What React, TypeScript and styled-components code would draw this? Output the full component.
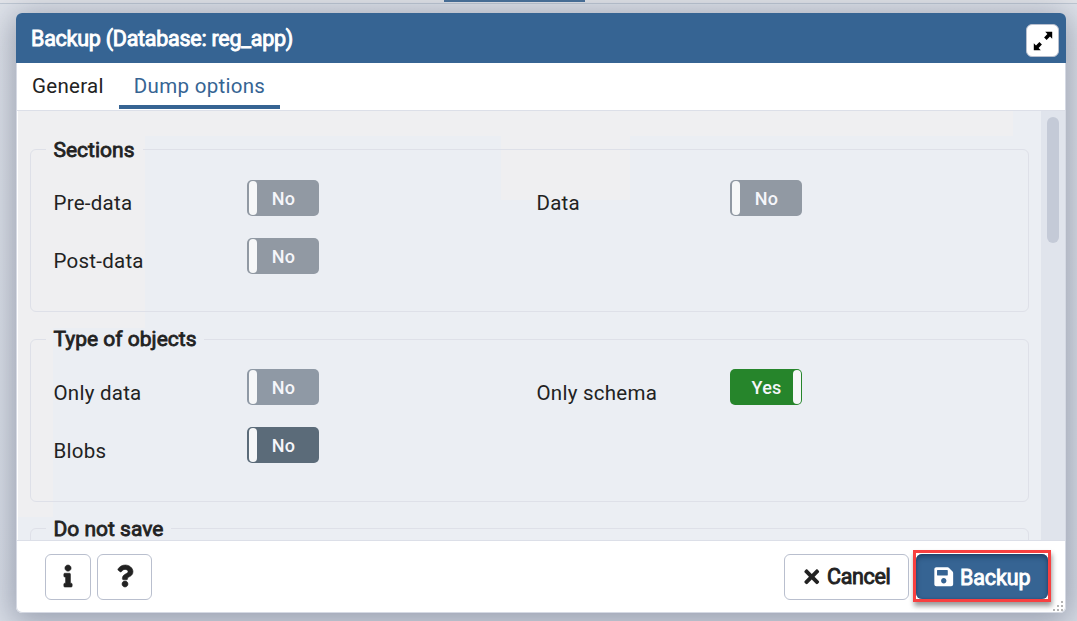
import React from 'react';
import styled, { createGlobalStyle } from 'styled-components';
import { FaInfo, FaQuestion, FaTimes, FaSave } from 'react-icons/fa';

const GlobalStyle = createGlobalStyle`
  *, *::before, *::after { box-sizing: border-box; }
  body {
    margin: 0;
    font-family: Roboto, 'Liberation Sans', sans-serif;
    font-size: 20px;
    color: #222;
    overflow: hidden;
  }
`;

const Page = styled.div`
  height: 621px;
  display: flex;
  flex-direction: column;
  background: linear-gradient(180deg, #dfe3ea, #d9dee7);
  overflow: hidden;
`;

const TopStrip = styled.div`
  height: 4px;
  flex: none;
  background: #e3e5ea;
  border-bottom: 1px solid #bfc8d3;
  padding-left: 444px;
`;

const ActiveMarker = styled.div`
  width: 141px;
  height: 2px;
  background: #48719a;
`;

const Dialog = styled.section`
  margin: 9px 0 0 16px;
  width: 1050px;
  height: 600px;
  display: flex;
  flex-direction: column;
  background: #fff;
  border-radius: 6px;
  box-shadow: 0 0 0 1px #d5d9e3 inset, 0 5px 32px 4px rgba(60, 68, 96, 0.42);
`;

const Header = styled.header`
  height: 50px;
  flex: none;
  display: flex;
  align-items: center;
  justify-content: space-between;
  padding: 0 7px 0 15px;
  border-radius: 6px 6px 0 0;
  background: #366493;
  color: #fff;
`;

const Title = styled.h1`
  margin: 0;
  padding-top: 2px;
  font-size: 21.5px;
  line-height: 28px;
  font-weight: 400;
  letter-spacing: -0.26px;
  -webkit-text-stroke: 0.9px currentColor;
`;

const ExpandButton = styled.button`
  width: 33px;
  height: 33px;
  margin-top: 5px;
  display: grid;
  place-items: center;
  padding: 1px 0 0;
  border: 1px solid #b9c0cf;
  border-radius: 6px;
  background: #fff;
  color: #000;
`;

const TabBar = styled.nav`
  height: 48px;
  flex: none;
  display: flex;
  margin: 0 1px;
  border-bottom: 1px solid #dcdfe8;
`;

const Tab = styled.div<{ $active?: boolean }>`
  height: 46px;
  padding: 0 15px;
  line-height: 46px;
  font-size: 20.5px;
  letter-spacing: 0.3px;
  color: ${p => (p.$active ? '#366493' : '#222')};
  border-bottom: ${p => (p.$active ? '4px solid #366493' : '0')};
`;

const Body = styled.div`
  height: 429px;
  flex: none;
  display: flex;
  margin: 0 1px 0 2px;
  overflow: hidden;
  background:
    linear-gradient(#efeff1, #efeff1) 0 0 / 995px 25px no-repeat,
    linear-gradient(#efeff1, #efeff1) 0 0 / 127px 217px no-repeat,
    linear-gradient(#efeff1, #efeff1) 0 0 / 35px 406px no-repeat,
    linear-gradient(#efeff1, #efeff1) 483px 0 / 129px 89px no-repeat,
    #ebeef3;
`;

const Options = styled.div`
  flex: 1;
  padding: 25px 12px 0;
`;

const Group = styled.fieldset`
  min-width: 0;
  height: 176px;
  margin: 0 0 14px;
  padding: 0 0 0 23px;
  border: 1px solid #dee0e8;
  border-radius: 6px;

  &:nth-child(2) { margin-bottom: 13px; }
`;

const Legend = styled.legend<{ $line: number }>`
  margin-left: -8.5px;
  padding: 0 8px;
  height: 26px;
  line-height: ${p => p.$line}px;
  font-size: 21px;
  font-weight: 400;
  -webkit-text-stroke: 0.8px currentColor;
`;

const Grid = styled.div<{ $top: number }>`
  display: grid;
  grid-template-columns: 483px 1fr;
  grid-auto-rows: 36px;
  row-gap: 22px;
  padding-top: ${p => p.$top}px;
`;

const Option = styled.div`
  display: grid;
  grid-template-columns: 193px 72px;
`;

const Label = styled.span<{ $drop: number }>`
  padding-top: ${p => p.$drop}px;
  line-height: 28px;
  font-size: 20.5px;
  letter-spacing: 0.25px;
  margin-left: -0.5px;
`;

const Switch = styled.div<{ $tone: string; $on?: boolean }>`
  height: 36px;
  display: flex;
  flex-direction: ${p => (p.$on ? 'row-reverse' : 'row')};
  padding: 1px;
  border-radius: 5px;
  overflow: hidden;
  background: ${p => p.$tone};
`;

const Knob = styled.span`
  width: 8px;
  border-radius: 5px;
  background: #f6f7f8;
  margin: 0 0 0 1px;
`;

const SwitchText = styled.span<{ $on?: boolean }>`
  flex: 1;
  padding: ${p => (p.$on ? '0 0 0 10px' : '0 8px 0 0')};
  line-height: 35px;
  text-align: center;
  font-size: 18px;
  font-weight: 500;
  letter-spacing: 0.2px;
  color: #f5f6fa;
`;

const ScrollTrack = styled.div`
  width: 24px;
  padding: 6px 6px 0;
  background: #e0e4ec;
`;

const ScrollThumb = styled.div`
  height: 126px;
  border-radius: 6px;
  background: #c4cad7;
`;

const Footer = styled.footer`
  flex: 1;
  display: flex;
  align-items: flex-start;
  margin: 0 1px;
  padding: 9px 14px 0 28px;
  border-top: 1px solid #dcdfe8;
  position: relative;
`;

const Button = styled.button<{ $width: number }>`
  width: ${p => p.$width}px;
  height: 46px;
  margin: 4px 6px 0 0;
  display: flex;
  align-items: center;
  justify-content: center;
  gap: 5px;
  padding: 0;
  border: 1px solid #b9bfce;
  border-radius: 6px;
  background: #fff;
  color: #222;
  font: 400 21.5px Roboto, 'Liberation Sans', sans-serif;
  -webkit-text-stroke: 0.9px currentColor;
`;

const IconButton = styled(Button)`
  padding-bottom: 2px;
  font-size: 22px;
  svg { stroke: currentColor; stroke-width: 14px; overflow: visible; }
`;

const CancelButton = styled(Button)`
  letter-spacing: -0.35px;
  padding: 0 2px 1px 0;
`;

const Spacer = styled.div`
  flex: 1;
`;

const Highlight = styled.div`
  width: 138px;
  height: 52px;
  margin-left: -2px;
  border: 3px solid #f84040;
  background: #fff;
  box-shadow: 1px 4px 5px rgba(0, 0, 0, 0.4);
`;

const PrimaryButton = styled(Button)`
  height: 45px;
  margin: 1px 0 0;
  padding-top: 1px;
  border: 0;
  background: #366493;
  color: #fff;
  letter-spacing: -0.1px;
  box-shadow: inset 0 3px 5px rgba(20, 40, 70, 0.5), inset 0 0 2px #28527c;
`;

const Grip = styled.svg`
  position: absolute;
  right: 0;
  bottom: 0;
`;

type OptionData = { label: string; tone: string; on?: boolean };

type GroupData = {
  title: string;
  line: number;
  top: number;
  drop: number;
  options: OptionData[];
};

const MUTED = '#9199a3';

const groups: GroupData[] = [
  {
    title: 'Sections',
    line: 29,
    top: 18,
    drop: 9,
    options: [
      { label: 'Pre-data', tone: MUTED },
      { label: 'Data', tone: MUTED },
      { label: 'Post-data', tone: MUTED },
    ],
  },
  {
    title: 'Type of objects',
    line: 27,
    top: 17,
    drop: 10,
    options: [
      { label: 'Only data', tone: '#8f99a5' },
      { label: 'Only schema', tone: '#26852b', on: true },
      { label: 'Blobs', tone: '#5b6b79' },
    ],
  },
  { title: 'Do not save', line: 29, top: 17, drop: 10, options: [] },
];

export default function App() {
  return (
    <>
      <GlobalStyle />
      <Page>
        <TopStrip><ActiveMarker /></TopStrip>
        <Dialog>
          <Header>
            <Title>Backup (Database: reg_app)</Title>
            <ExpandButton aria-label="Maximize">
              <svg width="20" height="20" viewBox="0 0 20 20" fill="currentColor">
                <path d="M12.2 0.8h7v7l-2.2-2.2-3.4 3.3-2.5-2.5 3.3-3.4z" />
                <path d="M7.8 19.2H0.8V12.2l2.2 2.2 3.4-3.3 2.5 2.5-3.3 3.4z" />
              </svg>
            </ExpandButton>
          </Header>
          <TabBar>
            <Tab>General</Tab>
            <Tab $active>Dump options</Tab>
          </TabBar>
          <Body>
            <Options>
              {groups.map(g => (
                <Group key={g.title}>
                  <Legend $line={g.line}>{g.title}</Legend>
                  <Grid $top={g.top}>
                    {g.options.map(o => (
                      <Option key={o.label}>
                        <Label $drop={g.drop}>{o.label}</Label>
                        <Switch $tone={o.tone} $on={o.on}>
                          <Knob />
                          <SwitchText $on={o.on}>{o.on ? 'Yes' : 'No'}</SwitchText>
                        </Switch>
                      </Option>
                    ))}
                  </Grid>
                </Group>
              ))}
            </Options>
            <ScrollTrack><ScrollThumb /></ScrollTrack>
          </Body>
          <Footer>
            <IconButton $width={46} aria-label="Info"><FaInfo /></IconButton>
            <IconButton $width={55} aria-label="Help"><FaQuestion /></IconButton>
            <Spacer />
            <CancelButton $width={125}><FaTimes />Cancel</CancelButton>
            <Highlight>
              <PrimaryButton $width={132}><FaSave />Backup</PrimaryButton>
            </Highlight>
            <Grip width="13" height="13" fill="#b4b4b4">
              {[[9, 1], [5, 5], [9, 5], [1, 9], [5, 9], [9, 9]].map(([x, y]) => (
                <rect key={`${x}-${y}`} x={x} y={y} width="2" height="2" />
              ))}
            </Grip>
          </Footer>
        </Dialog>
      </Page>
    </>
  );
}
